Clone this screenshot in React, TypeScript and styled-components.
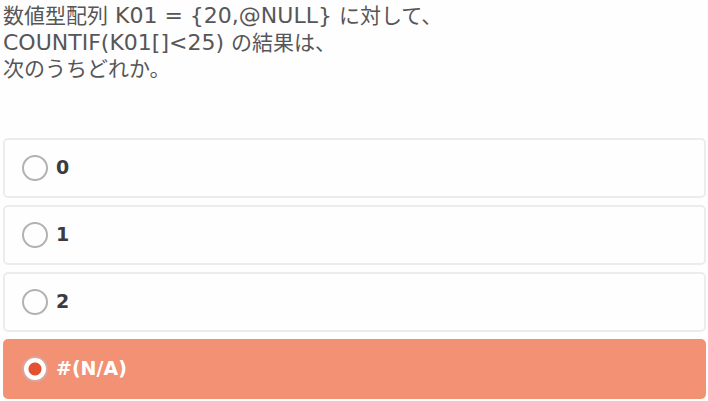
import React, { useState } from "react";
import styled, { createGlobalStyle } from "styled-components";

const GlobalStyle = createGlobalStyle`
  *, *::before, *::after { box-sizing: border-box; }
  body {
    margin: 0;
    background: #fefefe;
    color: #565658;
    font-family: "DejaVu Sans", "Noto Sans CJK JP", sans-serif;
  }
`;

const Quiz = styled.form`
  padding: 2px 2px 2px 3px;
`;

const Question = styled.h1`
  margin: 0 0 55px;
  font-size: 21px;
  font-weight: 400;
  line-height: 27px;
`;

const Line = styled.span`
  display: block;
  height: 27px;
`;

const Code = styled.span`
  font-family: "DejaVu Sans", sans-serif;
  font-size: 22px;
`;

const Choices = styled.fieldset`
  display: grid;
  gap: 7px;
  margin: 0;
  padding: 0;
  border: 0;
  min-width: 0;
`;

const Choice = styled.label<{ $selected: boolean }>`
  display: flex;
  align-items: center;
  gap: 8px;
  height: 60px;
  padding: 0 17px;
  border: 2px solid ${({ $selected }) => ($selected ? "#f29174" : "#ececee")};
  border-radius: 5px;
  background: ${({ $selected }) => ($selected ? "#f29174" : "#fefefe")};
  color: ${({ $selected }) => ($selected ? "#ffffff" : "#3c3c40")};
  cursor: pointer;
`;

const Radio = styled.input`
  appearance: none;
  flex: none;
  width: 26px;
  height: 26px;
  margin: 0;
  border: 2px solid #b2b2b2;
  border-radius: 50%;
  background: #fefefe;

  &:checked {
    border-color: #d9a69b;
    background: radial-gradient(circle, #e35130 6px, #ffffff 7px);
  }
`;

const ChoiceText = styled.span`
  padding-bottom: 2px;
  font-size: 19px;
  font-weight: 700;
  line-height: 24px;
`;

const options = ["0", "1", "2", "#(N/A)"];

export default function App() {
  const [selected, setSelected] = useState("#(N/A)");

  return (
    <>
      <GlobalStyle />
      <Quiz>
        <Question id="question" lang="ja">
          <Line>
            数値型配列<Code> K01 = {"{20,@NULL}"} </Code>に対して、
          </Line>
          <Line>
            <Code>COUNTIF(K01[]&lt;25) </Code>の結果は、
          </Line>
          <Line>次のうちどれか。</Line>
        </Question>
        <Choices aria-labelledby="question">
          {options.map((option) => (
            <Choice key={option} $selected={option === selected}>
              <Radio
                type="radio"
                name="answer"
                value={option}
                checked={option === selected}
                onChange={() => setSelected(option)}
              />
              <ChoiceText>{option}</ChoiceText>
            </Choice>
          ))}
        </Choices>
      </Quiz>
    </>
  );
}
